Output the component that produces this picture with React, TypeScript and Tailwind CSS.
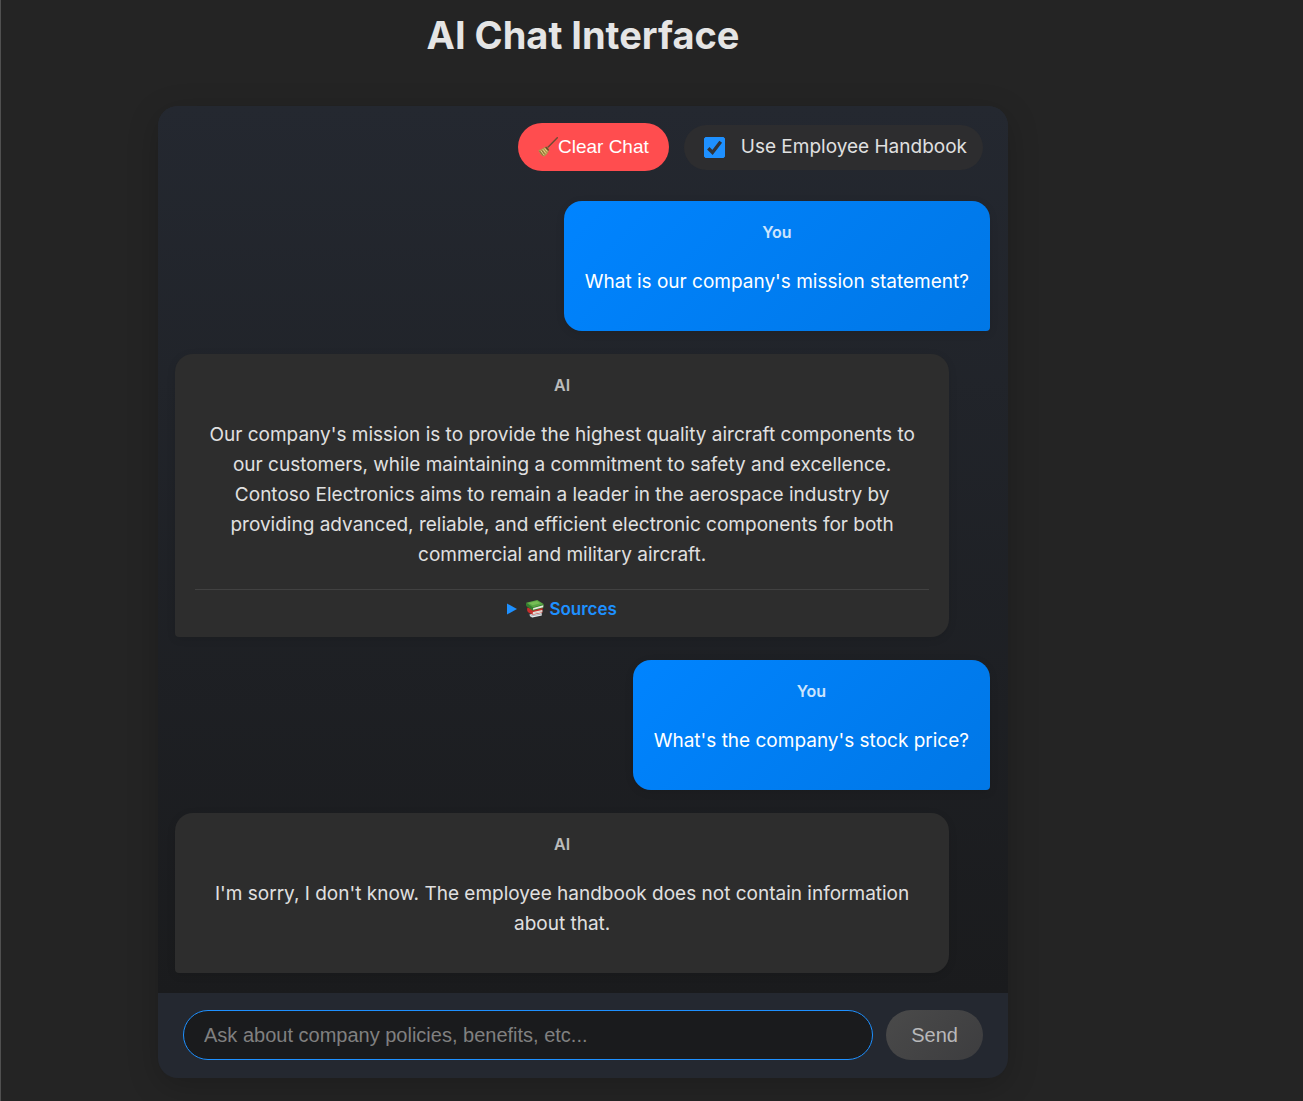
import { useState, type ReactNode } from 'react';

const BroomIcon = () => (
  <svg viewBox="0 0 20 20" className="h-5 w-5 shrink-0" fill="none" aria-hidden="true">
    <path d="M19.300.700 9.500 10.800" stroke="#6f4a34" strokeWidth="1.400" strokeLinecap="round" />
    <path d="M7.600 9.800C6 10.200 4.500 11.600 3 12.300c-.9.500-1.800.700-2.600.800.8 2.900 2.800 5.700 5.500 6.600 2.300-1.300 4.500-3.600 4.900-6.500z" fill="#b3934b" />
    <path d="m2.800 13.500 3.400 4.600M4.800 12.200l3.200 4.300M6.700 11.200l2.500 3.300" stroke="#e4cf86" strokeWidth="1" />
    <path d="m1.500 14 3.600 4.700M4 13.500l2.500 3.800" stroke="#6f5a2b" strokeWidth=".6" />
    <path d="m7.600 10 3.100 3.300" stroke="#5f4528" strokeWidth="1.200" />
    <path d="m8.600 9.900 1.300-.5.900 1-.4 1.300z" fill="#9a6c42" />
  </svg>
);

const BooksIcon = () => (
  <svg viewBox="0 0 20 20" className="h-5 w-5 shrink-0" fill="none" aria-hidden="true">
    <path d="m3.500 14 13-1.500.700 4.500-10 2c-2.200.200-4-2.500-3.700-5z" fill="#343638" />
    <path d="m4.500 15.400 12-1.800.3 3-9.500 1.900c-1.500-.5-2.600-1.600-2.800-3.100z" fill="#e8ecef" />
    <path d="m5.500 17 11-1.900" stroke="#939aa0" strokeWidth=".7" />
    <path d="m2.400 8.500 5.900 2 9.400-2-.4 5.200-9.500 2-4.700-2.500c-1-.9-1.300-3-.7-4.700z" fill="#c62f2c" />
    <path d="m8.300 13 9-1.900v2.200L8 15.200c-.5-.7-.4-1.600.3-2.200z" fill="#f0eee9" />
    <path d="m8.100 14.200 9-1.900" stroke="#b4aaa4" strokeWidth=".5" />
    <path d="m1.200 3.700 6.900 4.200 10.800-2.600-.5 3.500-10.600 3-5.900-4.200c-.9-.8-1.200-2.400-.7-3.900z" fill="#347e2e" />
    <path d="m8.400 8.900 9.900-2.600-.1 1.900-10 2.600c-.4-.5-.3-1.500.2-1.900z" fill="#e9eadf" />
    <path d="M1.200 3.700 12.300 1l6.600 4.300L8.100 8.500z" fill="#58a744" />
    <path d="m3.800 4 8-1.900 3.600 2.200-7.700 2z" fill="#76bd55" />
  </svg>
);

function Message({ own = false, children, sources = false }: { own?: boolean; children: ReactNode; sources?: boolean }) {
  return (
    <article
      className={
        own
          ? 'max-w-[95%] self-end rounded-[18px] rounded-br-[4px] bg-linear-135 from-[#0084ff] to-[#0077e6] px-[21px] pt-[19px] text-center text-white shadow-[0_2px_8px_rgba(0,0,0,0.1)]'
          : 'max-w-[95%] self-start rounded-[18px] rounded-bl-[4px] bg-[#2d2d2d] px-5 pt-[19px] text-center text-[#e0e0e0] shadow-[0_2px_8px_rgba(0,0,0,0.1)]'
      }
    >
      <strong className="block text-base leading-6 font-semibold opacity-80">{own ? 'You' : 'AI'}</strong>
      <p className={sources ? 'mt-[23px] mb-[19px]' : 'mt-[23px] mb-[34px]'}>{children}</p>
      {sources && (
        <details className="border-t border-[#414141] pt-[7px] pb-4">
          <summary className="flex cursor-pointer list-none items-center justify-center text-[17px] leading-6 font-semibold text-[#1e90ff]">
            <svg viewBox="0 0 10 12" className="mr-2 h-3 w-[10px]" aria-hidden="true">
              <path d="M0 0.500v11l10-5.500z" fill="currentColor" />
            </svg>
            <BooksIcon />
            <span className="ml-1">Sources</span>
          </summary>
          <p>Employee Handbook</p>
        </details>
      )}
    </article>
  );
}

export default function App() {
  const [checked, setChecked] = useState(true);
  return (
    <div className="min-h-screen border-l border-[#505050] bg-[#242424] pr-[138px] pb-[23px] font-['Inter',sans-serif] text-[19px] leading-[30px] text-[#e0e0e0]">
      <h1 className="pt-[11px] text-center text-[38px] leading-[48px] font-bold text-[#e5e5e5]">AI Chat Interface</h1>
      <main className="mx-auto mt-[47px] max-w-[850px] overflow-hidden rounded-[20px] bg-[#242830] shadow-[0_8px_32px_rgba(0,0,0,0.2)]">
        <section className="flex flex-col bg-linear-to-b from-[#242830] to-[#1a1b1d] px-[18px] pb-5">
          <header className="flex items-center justify-end gap-[15px] pt-[17px] pr-[7px] pb-[30px]">
            <button type="button" className="flex h-12 items-center rounded-[24px] bg-[#ff4d4f] px-5 font-['Liberation_Sans',sans-serif] text-[19px] text-white">
              <BroomIcon />
              <span>Clear Chat</span>
            </button>
            <label className="flex h-[45px] cursor-pointer items-center rounded-[23px] bg-[#2d2d2f] pr-4 pl-5">
              <span className="relative mr-4 flex">
                <input
                  type="checkbox"
                  checked={checked}
                  onChange={(e) => setChecked(e.target.checked)}
                  className="h-[21px] w-[21px] appearance-none rounded-[2px] border border-[#1e90ff] checked:bg-[#1e90ff]"
                />
                {checked && (
                  <svg viewBox="0 0 21 21" className="pointer-events-none absolute inset-0 h-[21px] w-[21px]" aria-hidden="true">
                    <path d="m4.300 11.300 4.200 4.200 8.200-10.800" fill="none" stroke="#303338" strokeWidth="3.400" />
                  </svg>
                )}
              </span>
              Use Employee Handbook
            </label>
          </header>
          <div className="-ml-px flex flex-col gap-[23px]">
            <Message own>What is our company's mission statement?</Message>
            <Message sources>
              Our company's mission is to provide the highest quality aircraft components to our customers, while maintaining a commitment to safety and
              excellence. Contoso Electronics aims to remain a leader in the aerospace industry by providing advanced, reliable, and efficient electronic
              components for both commercial and military aircraft.
            </Message>
            <Message own>What's the company's stock price?</Message>
            <Message>I'm sorry, I don't know. The employee handbook does not contain information about that.</Message>
          </div>
        </section>
        <form onSubmit={(e) => e.preventDefault()} className="flex gap-[13px] px-[25px] pt-[17px] pb-[18px] font-['Liberation_Sans',sans-serif]">
          <input
            type="text"
            aria-label="Your question"
            placeholder="Ask about company policies, benefits, etc..."
            className="h-[50px] min-w-0 flex-1 rounded-full border border-[#1e90ff] bg-[#1a1b1d] px-5 text-[20px] text-white outline-none placeholder:text-[#808080]"
          />
          <button type="submit" className="h-[50px] rounded-full bg-linear-135 from-[#4a4a4a] to-[#3d3d3f] px-[25px] text-[20px] text-[#b8b8ba]">
            Send
          </button>
        </form>
      </main>
    </div>
  );
}
